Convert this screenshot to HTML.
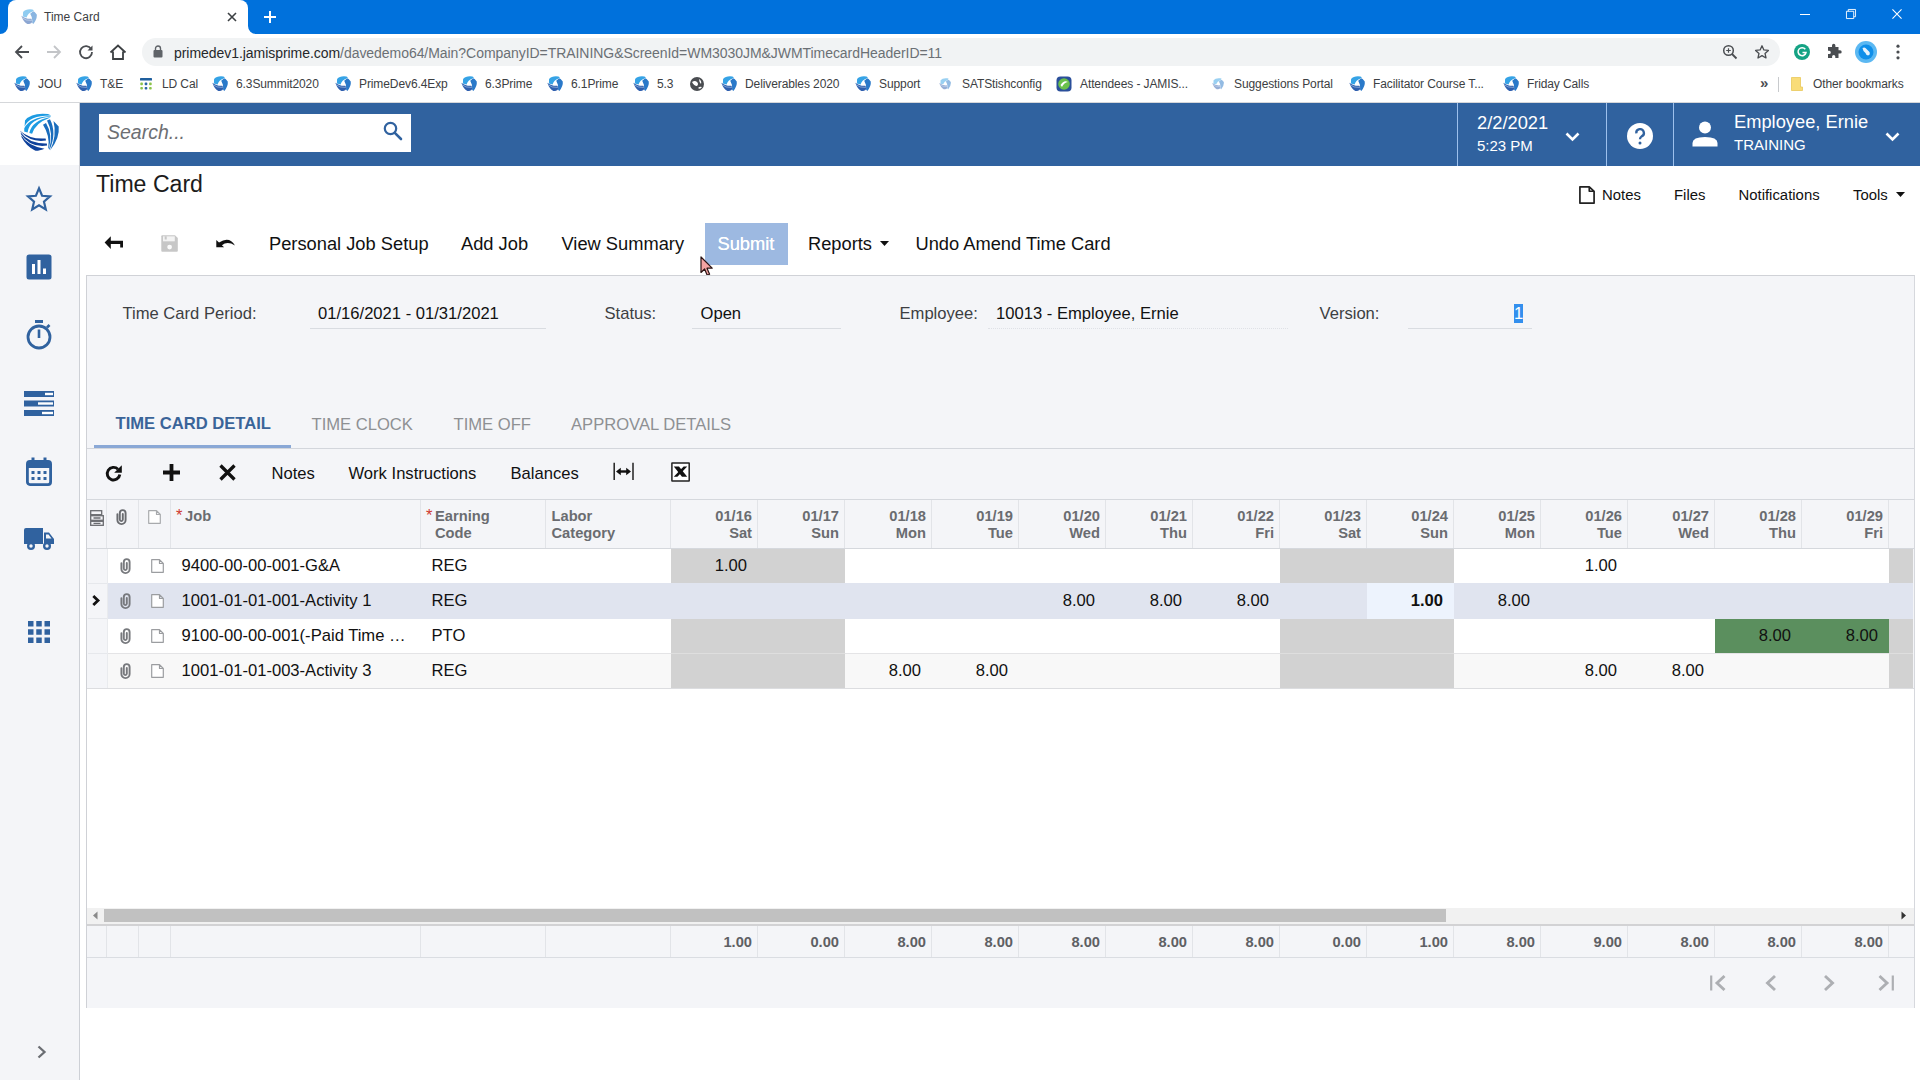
<!DOCTYPE html>
<html>
<head>
<meta charset="utf-8">
<title>Time Card</title>
<style>
*{box-sizing:border-box;margin:0;padding:0}
html,body{width:1920px;height:1080px;overflow:hidden;background:#fff}
body{font-family:"Liberation Sans",sans-serif;color:#111;position:relative}
.abs{position:absolute}
.t{position:absolute;white-space:nowrap;line-height:1}
svg{position:absolute;overflow:visible}
/* chrome */
#titlebar{left:0;top:0;width:1920px;height:34px;background:#0071dc}
#tab{left:8px;top:0;width:240px;height:34px;background:#fff;border-radius:8px 8px 0 0}
#navbar{left:0;top:34px;width:1920px;height:34px;background:#fff}
#pill{left:142px;top:38px;width:1638px;height:28px;border-radius:14px;background:#f1f3f4}
#bmbar{left:0;top:68px;width:1920px;height:34px;background:#fff}
#bmline{left:0;top:102px;width:1920px;height:1px;background:#d5d7da}
.bm{font-size:12px;color:#3c4043;top:78px;letter-spacing:-0.1px}
/* app */
#hdr{left:80px;top:103px;width:1840px;height:63px;background:#30629f}
#side{left:0;top:103px;width:80px;height:977px;background:#f4f5f8;border-right:1px solid #cdd0d6}
#logo{left:0;top:103px;width:79px;height:62px;background:#fff}
#search{left:99px;top:114px;width:312px;height:38px;background:#fff}
.hsep{top:103px;width:1px;height:63px;background:#9dc0ec}
.tb{font-size:17px;color:#111;top:235px}
.lbl{font-size:16px;color:#444;top:306px}
.val{font-size:16px;color:#111;top:306px}
.uline{height:1px;background:#d9dce1;top:328px}
#panel{left:86px;top:275px;width:1829px;height:733px;background:#f4f5f8;border-top:1px solid #d0d2d7;border-left:1px solid #cfd1d6;border-right:1px solid #d6d8dd}
.tab{font-size:16px;color:#8b8d90;top:416px}
.gtb{font-size:16px;color:#111;top:465px}
.hl{height:1px;background:#d5d8dd}
.vl{width:1px;background:#e2e4e8}
.ch{font-size:13px;font-weight:bold;color:#6c6e72;line-height:17px;position:absolute;white-space:nowrap}
.dh{font-size:13px;font-weight:bold;color:#6c6e72;line-height:17px;position:absolute;text-align:right;width:80px;white-space:nowrap}
.cell{font-size:16px;color:#111}
.num{font-size:16px;color:#111;text-align:right;width:80px}
.tot{font-size:14px;font-weight:bold;color:#5a5c60;text-align:right;width:80px;top:935px}
.gray{background:#d2d2d2}
</style>
</head>
<body>
<!-- ===== browser chrome ===== -->
<div id="titlebar" class="abs"></div>
<div id="tab" class="abs"></div>
<div id="navbar" class="abs"></div>
<div id="pill" class="abs"></div>
<div id="bmbar" class="abs"></div>
<div id="bmline" class="abs"></div>
<!-- tab curve corners -->
<svg style="left:0;top:26px" width="8" height="8"><path d="M8 0 V8 H0 A8 8 0 0 0 8 0Z" fill="#fff"/></svg>
<svg style="left:248px;top:26px" width="8" height="8"><path d="M0 0 V8 H8 A8 8 0 0 1 0 0Z" fill="#fff"/></svg>
<!-- favicon -->
<svg style="left:21px;top:9px;opacity:0.55" width="16" height="16"><use href="#jam"/></svg>
<div class="t" style="left:44px;top:11px;font-size:12px;color:#3c4043">Time Card</div>
<svg style="left:227px;top:12px" width="10" height="10" viewBox="0 0 10 10"><path d="M1 1 L9 9 M9 1 L1 9" stroke="#3c4043" stroke-width="1.6" fill="none"/></svg>
<svg style="left:264px;top:11px" width="12" height="12" viewBox="0 0 12 12"><path d="M6 0 V12 M0 6 H12" stroke="#fff" stroke-width="2" fill="none"/></svg>
<!-- window controls -->
<svg style="left:1800px;top:14px" width="10" height="2"><rect width="10" height="1" fill="#fff"/></svg>
<svg style="left:1846px;top:9px" width="10" height="10" viewBox="0 0 11 11"><path d="M0.5 2.5 H8.5 V10.5 H0.5Z M2.5 2.5 V0.5 H10.5 V8.5 H8.5" stroke="#fff" stroke-width="1" fill="none"/></svg>
<svg style="left:1892px;top:9px" width="10" height="10" viewBox="0 0 11 11"><path d="M0.5 0.5 L10.5 10.5 M10.5 0.5 L0.5 10.5" stroke="#fff" stroke-width="1.2" fill="none"/></svg>
<!-- nav icons -->
<svg style="left:14px;top:44px" width="16" height="16" viewBox="0 0 16 16"><path d="M15 8 H2.5 M8 2 L2 8 L8 14" stroke="#4a4d51" stroke-width="1.8" fill="none"/></svg>
<svg style="left:46px;top:44px" width="16" height="16" viewBox="0 0 16 16"><path d="M1 8 H13.5 M8 2 L14 8 L8 14" stroke="#c3c5c8" stroke-width="1.8" fill="none"/></svg>
<svg style="left:78px;top:44px" width="16" height="16" viewBox="0 0 16 16"><path d="M13.2 5.2 A6 6 0 1 0 14 8" stroke="#4a4d51" stroke-width="1.8" fill="none"/><path d="M14.5 1.5 V6.5 H9.5Z" fill="#4a4d51"/></svg>
<svg style="left:109px;top:43px" width="18" height="18" viewBox="0 0 18 18"><path d="M1.5 9.5 L9 2.5 L16.500 9.5 M4 8.500 V16 H14 V8.500" stroke="#3c4043" stroke-width="1.8" fill="none" stroke-linejoin="miter"/></svg>
<!-- lock -->
<svg style="left:153px;top:45px" width="10" height="13" viewBox="0 0 10 13"><rect x="0.500" y="5" width="9" height="7.500" rx="1" fill="#5f6368"/><path d="M2.5 5 V3.500 A2.5 2.5 0 0 1 7.5 3.500 V5" stroke="#5f6368" stroke-width="1.4" fill="none"/></svg>
<div class="t" style="left:174px;top:46px;font-size:14px;letter-spacing:-0.05px;color:#26282b">primedev1.jamisprime.com<span style="color:#6b7075">/davedemo64/Main?CompanyID=TRAINING&amp;ScreenId=WM3030JM&amp;JWMTimecardHeaderID=11</span></div>
<!-- right nav icons -->
<svg style="left:1722px;top:44px" width="16" height="16" viewBox="0 0 16 16"><circle cx="6.500" cy="6.500" r="4.800" stroke="#4a4d51" stroke-width="1.500" fill="none"/><path d="M10 10 L14.500 14.500" stroke="#4a4d51" stroke-width="1.800"/><path d="M4.200 6.500 H8.800 M6.500 4.200 V8.800" stroke="#4a4d51" stroke-width="1.200"/></svg>
<svg style="left:1754px;top:44px" width="16" height="16" viewBox="0 0 18 18"><path d="M9 2 L11.100 6.700 L16.200 7.200 L12.400 10.600 L13.500 15.700 L9 13 L4.500 15.700 L5.600 10.600 L1.800 7.200 L6.900 6.700Z" stroke="#4a4d51" stroke-width="1.500" fill="none" stroke-linejoin="round"/></svg>
<svg style="left:1794px;top:44px" width="16" height="16" viewBox="0 0 16 16"><circle cx="8" cy="8" r="8" fill="#15a384"/><path d="M11.300 5.300 A4 4 0 1 0 12 8.500 H8.500" stroke="#fff" stroke-width="1.500" fill="none"/></svg>
<svg style="left:1826px;top:44px" width="16" height="16" viewBox="0 0 16 16"><path d="M6 1.500 a1.700 1.700 0 0 1 3.400 0 V3 H12.500 V6.200 H14 a1.700 1.700 0 0 1 0 3.400 H12.500 V14 H9.300 V12.600 a1.600 1.600 0 0 0 -3.200 0 V14 H2 V10 H3.200 a1.600 1.600 0 0 0 0 -3.200 H2 V3 H6Z" fill="#4a4d51"/></svg>
<svg style="left:1855px;top:41px" width="22" height="22" viewBox="0 0 22 22"><circle cx="11" cy="11" r="11" fill="#5bb8f2"/><circle cx="11" cy="11" r="7.500" fill="#0f8fea"/><path d="M7.500 7 Q10 5.500 11.500 8 L14.500 11 Q15.500 14 13 14.500 Q11 14 10.500 12 Q8 10.500 7.500 7Z" fill="#e6f3fd"/></svg>
<svg style="left:1896px;top:44px" width="4" height="16" viewBox="0 0 4 16"><circle cx="2" cy="2.200" r="1.600" fill="#4a4d51"/><circle cx="2" cy="8" r="1.600" fill="#4a4d51"/><circle cx="2" cy="13.800" r="1.600" fill="#4a4d51"/></svg>
<!-- bookmarks -->
<svg width="0" height="0"><defs>
<g id="jam"><g transform="translate(-3.300 -2.500) scale(0.385)"><path d="M14 14 Q21 5.500 38 7.500 L42 9.500 L38.500 13 Q26.500 17 23 28.500 L13.500 26Z" fill="#35a3e6"/><path d="M35 17 L40 12.500 L44 14.500 L49.500 20.500 Q51 32 40.500 45.500 L37.500 42.500 Q39.500 30 32.500 19Z" fill="#2a79c9"/><path d="M9.500 24 Q20 33 36 32 L37.800 40 L35 43.500 Q27 46.500 25 45.500 Q15 40.500 9.500 24Z" fill="#2f5fae"/><path d="M12 29.500 Q20 37 36.500 36.200" stroke="#cfe0f3" stroke-width="1.300" fill="none"/></g></g>
</defs></svg>
<svg style="left:14px;top:76px" width="16" height="16"><use href="#jam"/></svg><div class="t bm" style="left:38px">JOU</div>
<svg style="left:76px;top:76px" width="16" height="16"><use href="#jam"/></svg><div class="t bm" style="left:100px">T&amp;E</div>
<svg style="left:140px;top:78px" width="12" height="12" viewBox="0 0 12 12"><rect x="0" y="0" width="12" height="2.600" rx="0.600" fill="#1f5f9e"/><g fill="#8bc34a"><rect x="0.300" y="4.600" width="2.600" height="2.600" rx="0.800"/><rect x="9.100" y="4.600" width="2.600" height="2.600" rx="0.800"/><rect x="0.300" y="9" width="2.600" height="2.600" rx="0.800"/><rect x="9.100" y="9" width="2.600" height="2.600" rx="0.800"/></g><g fill="#2b66a5"><rect x="4.700" y="4.600" width="2.600" height="2.600" rx="0.800"/><rect x="4.700" y="9" width="2.600" height="2.600" rx="0.800"/></g></svg><div class="t bm" style="left:162px">LD Cal</div>
<svg style="left:212px;top:76px" width="16" height="16"><use href="#jam"/></svg><div class="t bm" style="left:236px">6.3Summit2020</div>
<svg style="left:335px;top:76px" width="16" height="16"><use href="#jam"/></svg><div class="t bm" style="left:359px">PrimeDev6.4Exp</div>
<svg style="left:461px;top:76px" width="16" height="16"><use href="#jam"/></svg><div class="t bm" style="left:485px">6.3Prime</div>
<svg style="left:547px;top:76px" width="16" height="16"><use href="#jam"/></svg><div class="t bm" style="left:571px">6.1Prime</div>
<svg style="left:633px;top:76px" width="16" height="16"><use href="#jam"/></svg><div class="t bm" style="left:657px">5.3</div>
<svg style="left:689px;top:76px" width="16" height="16" viewBox="0 0 16 16"><circle cx="8" cy="8" r="7" fill="#4a4d51"/><path d="M3 6 Q6 4 8 6 Q10 8 8 10 Q5 10 3 6Z M10 3 Q13 5 12 8 Q10 6 10 3Z M9 12 Q11 10 13 11 Q11 14 9 12Z" fill="#fff"/></svg>
<svg style="left:721px;top:76px" width="16" height="16"><use href="#jam"/></svg><div class="t bm" style="left:745px">Deliverables 2020</div>
<svg style="left:855px;top:76px" width="16" height="16"><use href="#jam"/></svg><div class="t bm" style="left:879px">Support</div>
<svg style="left:939px;top:78px;opacity:0.5" width="12" height="12" viewBox="0 0 16 16"><use href="#jam"/></svg><div class="t bm" style="left:962px">SATStishconfig</div>
<svg style="left:1056px;top:76px" width="16" height="16" viewBox="0 0 16 16"><rect x="0.500" y="0.500" width="15" height="15" rx="4" fill="#2a4f9a"/><circle cx="8" cy="8" r="5.800" fill="#6ac04a"/><path d="M4.500 9 Q8 3.500 12 6 Q8 6.500 6 11Z" fill="#fff"/></svg><div class="t bm" style="left:1080px">Attendees - JAMIS...</div>
<svg style="left:1212px;top:78px;opacity:0.5" width="12" height="12" viewBox="0 0 16 16"><use href="#jam"/></svg><div class="t bm" style="left:1234px">Suggestions Portal</div>
<svg style="left:1349px;top:76px" width="16" height="16"><use href="#jam"/></svg><div class="t bm" style="left:1373px">Facilitator Course T...</div>
<svg style="left:1503px;top:76px" width="16" height="16"><use href="#jam"/></svg><div class="t bm" style="left:1527px">Friday Calls</div>
<div class="t" style="left:1760px;top:75px;font-size:15px;color:#4a4d51;font-weight:bold">»</div>
<div class="abs" style="left:1778px;top:77px;width:1px;height:15px;background:#c8cacd"></div>
<svg style="left:1791px;top:77px" width="12" height="14" viewBox="0 0 12 14"><path d="M0.500 0.500 H9.500 V10 H11.500 V13.500 H0.500Z" fill="#f9dc78" stroke="#e9c85a" stroke-width="0.800"/></svg>
<div class="t bm" style="left:1813px">Other bookmarks</div>
<!--CHROME-->
<!-- ===== app ===== -->
<div id="side" class="abs"></div>
<div id="logo" class="abs"></div>
<div id="hdr" class="abs"></div>
<div id="search" class="abs"></div>
<!-- search -->
<div class="t" style="left:107px;top:123px;font-size:19.500px;font-style:italic;color:#6d6f73">Search...</div>
<svg style="left:383px;top:121px" width="20" height="20" viewBox="0 0 20 20"><circle cx="7.500" cy="7.500" r="5.700" stroke="#30629f" stroke-width="2.200" fill="none"/><path d="M11.800 11.800 L18 18" stroke="#30629f" stroke-width="2.600" stroke-linecap="round"/></svg>
<!-- header right -->
<div class="abs hsep" style="left:1457px"></div>
<div class="abs hsep" style="left:1606px"></div>
<div class="abs hsep" style="left:1673px"></div>
<div class="t" style="left:1477px;top:114px;font-size:18.3px;color:#fff">2/2/2021</div>
<div class="t" style="left:1477px;top:138px;font-size:15px;color:#fff">5:23 PM</div>
<svg style="left:1565px;top:132px" width="15" height="10" viewBox="0 0 15 10"><path d="M1.500 1.500 L7.500 7.500 L13.500 1.500" stroke="#fff" stroke-width="2.600" fill="none"/></svg>
<svg style="left:1627px;top:123px" width="26" height="26" viewBox="0 0 26 26"><circle cx="13" cy="13" r="13" fill="#fff"/><path d="M9.300 10.300 A3.800 3.800 0 1 1 14.600 13.400 Q13 14.500 13 16.300" stroke="#30629f" stroke-width="2.300" fill="none"/><circle cx="13" cy="20" r="1.500" fill="#30629f"/></svg>
<svg style="left:1692px;top:121px" width="26" height="26" viewBox="0 0 26 26"><circle cx="13" cy="6.500" r="6" fill="#fff"/><path d="M0.500 25.500 V22 Q0.500 16 13 16 Q25.500 16 25.500 22 V25.500Z" fill="#fff"/></svg>
<div class="t" style="left:1734px;top:113px;font-size:18.3px;color:#fff">Employee, Ernie</div>
<div class="t" style="left:1734px;top:137px;font-size:15px;color:#fff">TRAINING</div>
<svg style="left:1885px;top:132px" width="15" height="10" viewBox="0 0 15 10"><path d="M1.500 1.500 L7.500 7.500 L13.500 1.500" stroke="#fff" stroke-width="2.600" fill="none"/></svg>
<!--APPHDR-->
<!-- logo -->
<svg style="left:10px;top:106px" width="60" height="54" viewBox="0 0 60 54">
<g fill="#1d9be2">
<path d="M15 14.500 Q21.500 6.400 38 8.100 L41.200 9.500 Q19.300 9.200 14.600 20.500Z"/>
<path d="M14.300 22.200 Q19.700 11 40.500 9.900 L41 10.500 Q18.900 12.600 17.600 26.600 L14.200 25.600Z"/>
<path d="M19.300 27 Q22 14.100 40.700 10.900 L38.200 12.600 Q25.800 16.800 22.100 27.800Z"/>
</g>
<g fill="#1a6dbd">
<path d="M43.500 15 L48.700 20.500 Q50 32 40 44.600 Q47.200 30 43.500 15Z"/>
<path d="M40 13.200 Q47 27 39.600 43.600 L38.900 43.400 Q44.200 28 37 14.500Z"/>
<path d="M36 17 Q43 28.500 38.700 42.800 L38.200 42.300 Q40.300 30 33 18.700Z"/>
</g>
<g fill="#0e419b">
<path d="M10 24.700 Q20 33.600 35.600 32.500 L36 34.600 Q21 37 10.500 25.600Z"/>
<path d="M10.700 26.600 Q19 38 36.800 37.400 L37.100 39.600 Q20 42 11 28.200Z"/>
<path d="M11.300 29.200 Q17 39.500 34.500 42.700 Q27 45.600 25 44.500 Q16 40 11.600 31.200Z"/>
</g>
</svg>
<!-- star -->
<svg style="left:25px;top:185px" width="28" height="28" viewBox="0 0 30 30"><path d="M15 3.500 L18.300 11.500 L26.800 12.200 L20.300 17.800 L22.300 26.200 L15 21.700 L7.700 26.200 L9.700 17.800 L3.200 12.200 L11.700 11.500Z" stroke="#30629f" stroke-width="2.300" fill="none" stroke-linejoin="miter"/></svg>
<!-- chart -->
<svg style="left:26px;top:254px" width="26" height="26" viewBox="0 0 26 26"><rect x="0.500" y="0.500" width="25" height="25" rx="2.500" fill="#30629f"/><rect x="6" y="10" width="3" height="10" fill="#fff"/><rect x="11.500" y="6" width="3" height="14" fill="#fff"/><rect x="17" y="14.500" width="3" height="5.500" fill="#fff"/></svg>
<!-- stopwatch -->
<svg style="left:25px;top:319px" width="28" height="32" viewBox="0 0 28 32"><rect x="10" y="1" width="8" height="3" fill="#30629f"/><circle cx="14" cy="18" r="11" stroke="#30629f" stroke-width="2.800" fill="none"/><rect x="12.700" y="10.500" width="2.600" height="8.500" fill="#30629f"/><path d="M22 8.500 L24.500 6" stroke="#30629f" stroke-width="2.600"/></svg>
<!-- list bars -->
<svg style="left:24px;top:391px" width="30" height="25" viewBox="0 0 30 25"><rect x="0" y="0" width="30" height="6" fill="#30629f"/><rect x="0" y="9.500" width="30" height="6" fill="#30629f"/><rect x="0" y="19" width="30" height="6" fill="#30629f"/><rect x="21" y="1.800" width="8" height="2.400" fill="#fff"/><rect x="14" y="11.300" width="15" height="2.400" fill="#fff"/><rect x="18" y="20.800" width="11" height="2.400" fill="#fff"/></svg>
<!-- calendar -->
<svg style="left:26px;top:457px" width="26" height="29" viewBox="0 0 26 29"><rect x="1.400" y="4.400" width="23.200" height="23.200" rx="2.500" stroke="#30629f" stroke-width="2.800" fill="none"/><rect x="1" y="4" width="24" height="7" fill="#30629f"/><rect x="5.500" y="0.500" width="3" height="6" fill="#30629f"/><rect x="17.500" y="0.500" width="3" height="6" fill="#30629f"/><g fill="#30629f"><rect x="5.500" y="14" width="3" height="3"/><rect x="11.500" y="14" width="3" height="3"/><rect x="17.500" y="14" width="3" height="3"/><rect x="5.500" y="20" width="3" height="3"/><rect x="11.500" y="20" width="3" height="3"/><rect x="17.500" y="20" width="3" height="3"/></g></svg>
<!-- truck -->
<svg style="left:24px;top:528px" width="30" height="23" viewBox="0 0 30 23"><path d="M0 2 Q0 0 2 0 H19 V16 H0Z" fill="#30629f"/><path d="M20 4.500 H25 L30 11 V16 H20Z" fill="#30629f"/><path d="M22 6.500 H24.500 L27.500 10.500 H22Z" fill="#f4f5f8"/><circle cx="7" cy="18" r="4" fill="#30629f"/><circle cx="7" cy="18" r="1.700" fill="#f4f5f8"/><circle cx="23" cy="18" r="4" fill="#30629f"/><circle cx="23" cy="18" r="1.700" fill="#f4f5f8"/></svg>
<!-- apps grid -->
<svg style="left:28px;top:621px" width="22" height="22" viewBox="0 0 24 24"><g fill="#30629f"><rect x="0" y="0" width="6" height="6"/><rect x="9" y="0" width="6" height="6"/><rect x="18" y="0" width="6" height="6"/><rect x="0" y="9" width="6" height="6"/><rect x="9" y="9" width="6" height="6"/><rect x="18" y="9" width="6" height="6"/><rect x="0" y="18" width="6" height="6"/><rect x="9" y="18" width="6" height="6"/><rect x="18" y="18" width="6" height="6"/></g></svg>
<!-- expand chevron -->
<svg style="left:37px;top:1045px" width="9" height="14" viewBox="0 0 9 14"><path d="M1.500 1.500 L7.500 7 L1.500 12.500" stroke="#6b6e73" stroke-width="2.300" fill="none"/></svg>
<!--SIDEBAR-->
<div class="t" style="left:96px;top:173px;font-size:23.1px;color:#1c1c1c;">Time Card</div>
<svg style="left:1579px;top:186px" width="16" height="18" viewBox="0 0 14 17" preserveAspectRatio="none"><path d="M0.800 0.800 H9 L13.200 5 V16.200 H0.800Z M9 0.800 V5 H13.200" stroke="#222" stroke-width="1.500" fill="none" stroke-linejoin="round"/></svg>
<div class="t" style="left:1602px;top:188px;font-size:14.9px;color:#111;">Notes</div>
<div class="t" style="left:1674px;top:188px;font-size:14.9px;color:#111;">Files</div>
<div class="t" style="left:1738.5px;top:188px;font-size:14.9px;color:#111;">Notifications</div>
<div class="t" style="left:1853px;top:188px;font-size:14.9px;color:#111;">Tools</div>
<svg style="left:1896px;top:192px" width="9" height="5"><path d="M0 0 H9 L4.500 5Z" fill="#111"/></svg>
<svg style="left:104px;top:236px" width="20" height="14" viewBox="0 0 20 14"><path d="M0.600 6.400 L6.800 0.200 V4.800 H19 V11.500 H16.200 V8 H6.800 V13Z" fill="#111"/></svg>
<svg style="left:161px;top:235px" width="17" height="17" viewBox="0 0 17 17"><path d="M0.300 1.200 Q0.300 0.300 1.200 0.300 H14 L16.800 3.100 V15.800 Q16.800 16.700 15.900 16.700 H1.200 Q0.300 16.700 0.300 15.800Z" fill="#c7c7c7"/><rect x="2" y="1.300" width="11.800" height="5" fill="#f3f3f3"/><rect x="3.700" y="1.300" width="2" height="3.200" fill="#c7c7c7"/><circle cx="8.600" cy="12.100" r="2.400" fill="#fbfbfb"/></svg>
<svg style="left:215px;top:238px" width="21" height="11" viewBox="0 0 21 11"><path d="M1.300 2 V9.300 H9.100 L6.900 7.300 Q12.500 2.800 20 7.600 Q14.500 -2.200 4 4.400Z" fill="#111"/></svg>
<div class="t" style="left:269px;top:235px;font-size:18.3px;color:#111;">Personal Job Setup</div>
<div class="t" style="left:461px;top:235px;font-size:18.3px;color:#111;">Add Job</div>
<div class="t" style="left:561.5px;top:235px;font-size:18.3px;color:#111;">View Summary</div>
<div class="abs" style="left:705px;top:223px;width:83px;height:42px;background:#9db9e1"></div>
<div class="t" style="left:717.5px;top:235px;font-size:18.3px;color:#fff;text-shadow:0 0 0.5px #fff">Submit</div>
<div class="t" style="left:808px;top:235px;font-size:18.3px;color:#111;">Reports</div>
<svg style="left:880px;top:241px" width="9" height="5"><path d="M0 0 H9 L4.500 5Z" fill="#111"/></svg>
<div class="t" style="left:915.5px;top:235px;font-size:18.3px;color:#111;">Undo Amend Time Card</div>
<svg style="left:700px;top:256px" width="14" height="21" viewBox="0 0 14 21"><path d="M1 1 V16.500 L4.600 13 L7.200 19.200 L9.600 18.200 L7 12.200 H12.200Z" fill="#f4a3a3" stroke="#2a1414" stroke-width="1.200" stroke-linejoin="round"/></svg>

<div id="panel" class="abs"></div>
<div class="t" style="left:122.5px;top:306px;font-size:16.6px;color:#3d3f43;">Time Card Period:</div>
<div class="t" style="left:318px;top:306px;font-size:16.6px;color:#111;">01/16/2021 - 01/31/2021</div>
<div class="abs uline" style="left:310px;width:236px"></div>
<div class="t" style="left:604.5px;top:306px;font-size:16.6px;color:#3d3f43;">Status:</div>
<div class="t" style="left:700.5px;top:306px;font-size:16.6px;color:#111;">Open</div>
<div class="abs uline" style="left:692px;width:149px"></div>
<div class="t" style="left:899.5px;top:306px;font-size:16.6px;color:#3d3f43;">Employee:</div>
<div class="t" style="left:996px;top:306px;font-size:16.6px;color:#111;">10013 - Employee, Ernie</div>
<div class="abs" style="left:988px;top:328px;width:300px;height:0;border-top:1px dotted #dfe1e6"></div>
<div class="t" style="left:1319.5px;top:306px;font-size:16.6px;color:#3d3f43;">Version:</div>
<div class="abs uline" style="left:1408px;width:124px"></div>
<div class="abs" style="left:1514px;top:304px;width:9px;height:19px;background:#338fee"></div>
<div class="t" style="left:1514px;top:306px;font-size:16.6px;color:#fff;">1</div>
<div class="t" style="left:115.5px;top:416px;font-size:16.6px;color:#3a6499;font-weight:bold">TIME CARD DETAIL</div>
<div class="t" style="left:311.5px;top:417px;font-size:16.6px;color:#8e9093;">TIME CLOCK</div>
<div class="t" style="left:453.5px;top:417px;font-size:16.6px;color:#8e9093;">TIME OFF</div>
<div class="t" style="left:571px;top:417px;font-size:16.6px;color:#8e9093;">APPROVAL DETAILS</div>
<div class="abs hl" style="left:87px;top:448px;width:1827px;background:#d3d6dc"></div>
<div class="abs" style="left:94px;top:445px;width:197px;height:3px;background:#8aa8d6"></div>
<svg style="left:105px;top:465px" width="17" height="17" viewBox="0 0 17 17"><path d="M13 4.200 A6.300 6.300 0 1 0 14.800 9.500" stroke="#111" stroke-width="2.900" fill="none"/><path d="M16.800 0.200 V7.800 H9.200Z" fill="#111"/></svg>
<svg style="left:163px;top:464px" width="17" height="17" viewBox="0 0 17 17"><path d="M8.500 0 V17 M0 8.500 H17" stroke="#111" stroke-width="3.800"/></svg>
<svg style="left:219px;top:464px" width="17" height="17" viewBox="0 0 17 17"><path d="M1.500 1.500 L15.500 15.500 M15.500 1.500 L1.500 15.500" stroke="#111" stroke-width="3.300"/></svg>
<div class="t" style="left:271.5px;top:466px;font-size:16.6px;color:#111;">Notes</div>
<div class="t" style="left:348.5px;top:466px;font-size:16.6px;color:#111;">Work Instructions</div>
<div class="t" style="left:510.5px;top:466px;font-size:16.6px;color:#111;">Balances</div>
<svg style="left:613px;top:463px" width="21" height="17" viewBox="0 0 21 17"><path d="M1.200 -0.300 V16.900 M20 -0.300 V16.900" stroke="#222" stroke-width="1.500"/><path d="M5.500 8.500 H15.500" stroke="#111" stroke-width="2.400"/><path d="M3 8.500 L7.800 4.700 V12.300Z M18 8.500 L13.200 4.700 V12.300Z" fill="#111"/></svg>
<svg style="left:671px;top:462px" width="19" height="20" viewBox="0 0 19 20"><rect x="0.900" y="0.900" width="17.300" height="18" rx="0.200" stroke="#222" stroke-width="1.500" fill="#fff"/><path d="M2.800 4.600 H8 L16.200 14.800 H11 Z" fill="#111"/><path d="M16.200 4.600 H12.600 L2.800 14.800 H6.400 Z" fill="#111"/></svg>

<div class="abs hl" style="left:87px;top:499px;width:1827px"></div>
<div class="abs hl" style="left:87px;top:548px;width:1827px"></div>
<div class="abs" style="left:107px;top:549px;width:1806px;height:34px;background:#fff"></div>
<div class="abs" style="left:107px;top:583px;width:1806px;height:36px;background:#e0e4ef"></div>
<div class="abs" style="left:107px;top:619px;width:1806px;height:34px;background:#fff"></div>
<div class="abs" style="left:107px;top:653px;width:1806px;height:35px;background:#f8f8f8"></div>
<div class="abs" style="left:87px;top:688px;width:1827px;height:220px;background:#fff"></div>
<div class="abs hl" style="left:87px;top:688px;width:1827px;background:#dcdde0"></div>
<div class="abs hl" style="left:107px;top:653px;width:1806px;background:#e4e4e6"></div>
<div class="abs gray" style="left:671px;top:549px;width:174px;height:34px"></div>
<div class="abs gray" style="left:1280px;top:549px;width:174px;height:34px"></div>
<div class="abs gray" style="left:1889px;top:549px;width:24px;height:34px"></div>
<div class="abs gray" style="left:671px;top:619px;width:174px;height:34px"></div>
<div class="abs gray" style="left:1280px;top:619px;width:174px;height:34px"></div>
<div class="abs gray" style="left:1889px;top:619px;width:24px;height:34px"></div>
<div class="abs gray" style="left:671px;top:653px;width:174px;height:35px"></div>
<div class="abs gray" style="left:1280px;top:653px;width:174px;height:35px"></div>
<div class="abs gray" style="left:1889px;top:653px;width:24px;height:35px"></div>
<div class="abs" style="left:671px;top:653px;width:174px;height:1px;background:#dedede"></div>
<div class="abs" style="left:1280px;top:653px;width:174px;height:1px;background:#dedede"></div>
<div class="abs" style="left:1889px;top:653px;width:24px;height:1px;background:#dedede"></div>
<div class="abs" style="left:1715px;top:619px;width:174px;height:34px;background:#5b8f5e"></div>
<div class="abs" style="left:1367px;top:583px;width:87px;height:36px;background:#edf3fd"></div>
<div class="abs vl" style="left:106px;top:500px;height:48px"></div>
<div class="abs vl" style="left:138px;top:500px;height:48px"></div>
<div class="abs vl" style="left:170px;top:500px;height:48px"></div>
<div class="abs vl" style="left:420px;top:500px;height:48px"></div>
<div class="abs vl" style="left:545px;top:500px;height:48px"></div>
<div class="abs vl" style="left:670px;top:500px;height:48px"></div>
<div class="abs vl" style="left:757px;top:500px;height:48px"></div>
<div class="abs vl" style="left:844px;top:500px;height:48px"></div>
<div class="abs vl" style="left:931px;top:500px;height:48px"></div>
<div class="abs vl" style="left:1018px;top:500px;height:48px"></div>
<div class="abs vl" style="left:1105px;top:500px;height:48px"></div>
<div class="abs vl" style="left:1192px;top:500px;height:48px"></div>
<div class="abs vl" style="left:1279px;top:500px;height:48px"></div>
<div class="abs vl" style="left:1366px;top:500px;height:48px"></div>
<div class="abs vl" style="left:1453px;top:500px;height:48px"></div>
<div class="abs vl" style="left:1540px;top:500px;height:48px"></div>
<div class="abs vl" style="left:1627px;top:500px;height:48px"></div>
<div class="abs vl" style="left:1714px;top:500px;height:48px"></div>
<div class="abs vl" style="left:1801px;top:500px;height:48px"></div>
<div class="abs vl" style="left:1888px;top:500px;height:48px"></div>
<div class="t" style="left:176px;top:507px;font-size:16.500px;color:#cf3a30">*</div>
<div class="t" style="left:185px;top:509px;font-size:14.7px;font-weight:bold;color:#6a6c70">Job</div>
<div class="t" style="left:426px;top:507px;font-size:16.500px;color:#cf3a30">*</div>
<div class="t" style="left:435px;top:509px;font-size:14.7px;font-weight:bold;color:#6a6c70">Earning</div>
<div class="t" style="left:435px;top:526px;font-size:14.7px;font-weight:bold;color:#6a6c70">Code</div>
<div class="t" style="left:551.5px;top:509px;font-size:14.7px;font-weight:bold;color:#6a6c70">Labor</div>
<div class="t" style="left:551.5px;top:526px;font-size:14.7px;font-weight:bold;color:#6a6c70">Category</div>
<div class="t" style="right:1168px;top:509px;font-size:14.7px;font-weight:bold;color:#6a6c70">01/16</div>
<div class="t" style="right:1168px;top:526px;font-size:14.7px;font-weight:bold;color:#6a6c70">Sat</div>
<div class="t" style="right:1081px;top:509px;font-size:14.7px;font-weight:bold;color:#6a6c70">01/17</div>
<div class="t" style="right:1081px;top:526px;font-size:14.7px;font-weight:bold;color:#6a6c70">Sun</div>
<div class="t" style="right:994px;top:509px;font-size:14.7px;font-weight:bold;color:#6a6c70">01/18</div>
<div class="t" style="right:994px;top:526px;font-size:14.7px;font-weight:bold;color:#6a6c70">Mon</div>
<div class="t" style="right:907px;top:509px;font-size:14.7px;font-weight:bold;color:#6a6c70">01/19</div>
<div class="t" style="right:907px;top:526px;font-size:14.7px;font-weight:bold;color:#6a6c70">Tue</div>
<div class="t" style="right:820px;top:509px;font-size:14.7px;font-weight:bold;color:#6a6c70">01/20</div>
<div class="t" style="right:820px;top:526px;font-size:14.7px;font-weight:bold;color:#6a6c70">Wed</div>
<div class="t" style="right:733px;top:509px;font-size:14.7px;font-weight:bold;color:#6a6c70">01/21</div>
<div class="t" style="right:733px;top:526px;font-size:14.7px;font-weight:bold;color:#6a6c70">Thu</div>
<div class="t" style="right:646px;top:509px;font-size:14.7px;font-weight:bold;color:#6a6c70">01/22</div>
<div class="t" style="right:646px;top:526px;font-size:14.7px;font-weight:bold;color:#6a6c70">Fri</div>
<div class="t" style="right:559px;top:509px;font-size:14.7px;font-weight:bold;color:#6a6c70">01/23</div>
<div class="t" style="right:559px;top:526px;font-size:14.7px;font-weight:bold;color:#6a6c70">Sat</div>
<div class="t" style="right:472px;top:509px;font-size:14.7px;font-weight:bold;color:#6a6c70">01/24</div>
<div class="t" style="right:472px;top:526px;font-size:14.7px;font-weight:bold;color:#6a6c70">Sun</div>
<div class="t" style="right:385px;top:509px;font-size:14.7px;font-weight:bold;color:#6a6c70">01/25</div>
<div class="t" style="right:385px;top:526px;font-size:14.7px;font-weight:bold;color:#6a6c70">Mon</div>
<div class="t" style="right:298px;top:509px;font-size:14.7px;font-weight:bold;color:#6a6c70">01/26</div>
<div class="t" style="right:298px;top:526px;font-size:14.7px;font-weight:bold;color:#6a6c70">Tue</div>
<div class="t" style="right:211px;top:509px;font-size:14.7px;font-weight:bold;color:#6a6c70">01/27</div>
<div class="t" style="right:211px;top:526px;font-size:14.7px;font-weight:bold;color:#6a6c70">Wed</div>
<div class="t" style="right:124px;top:509px;font-size:14.7px;font-weight:bold;color:#6a6c70">01/28</div>
<div class="t" style="right:124px;top:526px;font-size:14.7px;font-weight:bold;color:#6a6c70">Thu</div>
<div class="t" style="right:37px;top:509px;font-size:14.7px;font-weight:bold;color:#6a6c70">01/29</div>
<div class="t" style="right:37px;top:526px;font-size:14.7px;font-weight:bold;color:#6a6c70">Fri</div>
<svg style="left:90px;top:510px" width="14" height="16" viewBox="0 0 14 16"><g stroke="#6a6c70" stroke-width="1.300" fill="none"><rect x="0.700" y="0.700" width="11" height="4"/><rect x="0.700" y="5.700" width="12.600" height="4.600"/><rect x="0.700" y="11.300" width="12.600" height="4"/></g><path d="M3.500 8 H10.500 M3.500 13.300 H10.500" stroke="#6a6c70" stroke-width="1.300"/></svg>
<svg style="left:116px;top:509px" width="11" height="16" viewBox="0 0 11 16"><path d="M1.400 5.200 V11 A4.100 4.100 0 0 0 9.600 11 V4 A2.900 2.900 0 0 0 3.800 4 V10.600 A1.500 1.500 0 0 0 6.800 10.600 V5" stroke="#6a6c70" stroke-width="1.900" fill="none" stroke-linecap="round"/></svg>
<svg style="left:148px;top:510px" width="13" height="14" viewBox="0 0 13 14"><path d="M0.700 0.700 H8.500 L12.300 4.500 V13.300 H0.700Z M8.500 0.700 V4.500 H12.300" stroke="#a8aaad" stroke-width="1.200" fill="#fff" stroke-linejoin="round"/></svg>
<svg style="left:120px;top:558px" width="11" height="16" viewBox="0 0 11 16"><path d="M1.400 5.200 V11 A4.100 4.100 0 0 0 9.600 11 V4 A2.900 2.900 0 0 0 3.800 4 V10.600 A1.500 1.500 0 0 0 6.800 10.600 V5" stroke="#77797d" stroke-width="1.900" fill="none" stroke-linecap="round"/></svg>
<svg style="left:151px;top:559px" width="13" height="14" viewBox="0 0 13 14"><path d="M0.700 0.700 H8.500 L12.300 4.500 V13.300 H0.700Z M8.500 0.700 V4.500 H12.300" stroke="#9b9da0" stroke-width="1.200" fill="#fff" stroke-linejoin="round"/></svg>
<div class="t" style="left:181.5px;top:558px;font-size:16.6px;color:#111;">9400-00-00-001-G&amp;A</div>
<div class="t" style="left:431.5px;top:558px;font-size:16.6px;color:#111;">REG</div>
<div class="t" style="right:1173px;top:558px;font-size:16.6px;color:#111;">1.00</div>
<div class="t" style="right:303px;top:558px;font-size:16.6px;color:#111;">1.00</div>
<svg style="left:120px;top:593px" width="11" height="16" viewBox="0 0 11 16"><path d="M1.400 5.200 V11 A4.100 4.100 0 0 0 9.600 11 V4 A2.900 2.900 0 0 0 3.800 4 V10.600 A1.500 1.500 0 0 0 6.800 10.600 V5" stroke="#77797d" stroke-width="1.900" fill="none" stroke-linecap="round"/></svg>
<svg style="left:151px;top:594px" width="13" height="14" viewBox="0 0 13 14"><path d="M0.700 0.700 H8.500 L12.300 4.500 V13.300 H0.700Z M8.500 0.700 V4.500 H12.300" stroke="#9b9da0" stroke-width="1.200" fill="#fff" stroke-linejoin="round"/></svg>
<div class="t" style="left:181.5px;top:593px;font-size:16.6px;color:#111;">1001-01-01-001-Activity 1</div>
<div class="t" style="left:431.5px;top:593px;font-size:16.6px;color:#111;">REG</div>
<div class="t" style="right:825px;top:593px;font-size:16.6px;color:#111;">8.00</div>
<div class="t" style="right:738px;top:593px;font-size:16.6px;color:#111;">8.00</div>
<div class="t" style="right:651px;top:593px;font-size:16.6px;color:#111;">8.00</div>
<div class="t" style="right:477px;top:593px;font-size:16.6px;color:#111;"><b>1.00</b></div>
<div class="t" style="right:390px;top:593px;font-size:16.6px;color:#111;">8.00</div>
<svg style="left:120px;top:628px" width="11" height="16" viewBox="0 0 11 16"><path d="M1.400 5.200 V11 A4.100 4.100 0 0 0 9.600 11 V4 A2.900 2.900 0 0 0 3.800 4 V10.600 A1.500 1.500 0 0 0 6.800 10.600 V5" stroke="#77797d" stroke-width="1.900" fill="none" stroke-linecap="round"/></svg>
<svg style="left:151px;top:629px" width="13" height="14" viewBox="0 0 13 14"><path d="M0.700 0.700 H8.500 L12.300 4.500 V13.300 H0.700Z M8.500 0.700 V4.500 H12.300" stroke="#9b9da0" stroke-width="1.200" fill="#fff" stroke-linejoin="round"/></svg>
<div class="t" style="left:181.5px;top:628px;font-size:16.6px;color:#111;">9100-00-00-001(-Paid Time …</div>
<div class="t" style="left:431.5px;top:628px;font-size:16.6px;color:#111;">PTO</div>
<div class="t" style="right:129px;top:628px;font-size:16.6px;color:#111;">8.00</div>
<div class="t" style="right:42px;top:628px;font-size:16.6px;color:#111;">8.00</div>
<svg style="left:120px;top:663px" width="11" height="16" viewBox="0 0 11 16"><path d="M1.400 5.200 V11 A4.100 4.100 0 0 0 9.600 11 V4 A2.900 2.900 0 0 0 3.800 4 V10.600 A1.500 1.500 0 0 0 6.800 10.600 V5" stroke="#77797d" stroke-width="1.900" fill="none" stroke-linecap="round"/></svg>
<svg style="left:151px;top:664px" width="13" height="14" viewBox="0 0 13 14"><path d="M0.700 0.700 H8.500 L12.300 4.500 V13.300 H0.700Z M8.500 0.700 V4.500 H12.300" stroke="#9b9da0" stroke-width="1.200" fill="#fff" stroke-linejoin="round"/></svg>
<div class="t" style="left:181.5px;top:663px;font-size:16.6px;color:#111;">1001-01-01-003-Activity 3</div>
<div class="t" style="left:431.5px;top:663px;font-size:16.6px;color:#111;">REG</div>
<div class="t" style="right:999px;top:663px;font-size:16.6px;color:#111;">8.00</div>
<div class="t" style="right:912px;top:663px;font-size:16.6px;color:#111;">8.00</div>
<div class="t" style="right:303px;top:663px;font-size:16.6px;color:#111;">8.00</div>
<div class="t" style="right:216px;top:663px;font-size:16.6px;color:#111;">8.00</div>
<div class="abs" style="left:88px;top:583px;width:19px;height:1px;background:#e6e8ec"></div>
<div class="abs" style="left:88px;top:618px;width:19px;height:1px;background:#e6e8ec"></div>
<div class="abs" style="left:88px;top:653px;width:19px;height:1px;background:#e6e8ec"></div>
<div class="abs" style="left:107px;top:549px;width:1px;height:139px;background:#e9ebee"></div>
<svg style="left:92px;top:595px" width="8" height="11" viewBox="0 0 8 11"><path d="M1.300 1 L6 5.500 L1.300 10" stroke="#111" stroke-width="2.800" fill="none"/></svg>

<div class="abs" style="left:87px;top:908px;width:1827px;height:16px;background:#f1f1f1"></div>
<div class="abs" style="left:104px;top:909px;width:1342px;height:13px;background:#c1c1c1"></div>
<svg style="left:92px;top:911px" width="6" height="9"><path d="M5.500 0.500 V8.500 L1 4.500Z" fill="#8a8a8a"/></svg>
<svg style="left:1901px;top:911px" width="6" height="9"><path d="M0.500 0.500 V8.500 L5 4.500Z" fill="#333"/></svg>
<div class="abs hl" style="left:87px;top:924px;width:1827px;height:2px;background:#d2d2d4"></div>
<div class="abs hl" style="left:87px;top:957px;width:1827px;background:#dadde2"></div>
<div class="abs vl" style="left:106px;top:926px;height:31px"></div>
<div class="abs vl" style="left:138px;top:926px;height:31px"></div>
<div class="abs vl" style="left:170px;top:926px;height:31px"></div>
<div class="abs vl" style="left:420px;top:926px;height:31px"></div>
<div class="abs vl" style="left:545px;top:926px;height:31px"></div>
<div class="abs vl" style="left:670px;top:926px;height:31px"></div>
<div class="abs vl" style="left:757px;top:926px;height:31px"></div>
<div class="abs vl" style="left:844px;top:926px;height:31px"></div>
<div class="abs vl" style="left:931px;top:926px;height:31px"></div>
<div class="abs vl" style="left:1018px;top:926px;height:31px"></div>
<div class="abs vl" style="left:1105px;top:926px;height:31px"></div>
<div class="abs vl" style="left:1192px;top:926px;height:31px"></div>
<div class="abs vl" style="left:1279px;top:926px;height:31px"></div>
<div class="abs vl" style="left:1366px;top:926px;height:31px"></div>
<div class="abs vl" style="left:1453px;top:926px;height:31px"></div>
<div class="abs vl" style="left:1540px;top:926px;height:31px"></div>
<div class="abs vl" style="left:1627px;top:926px;height:31px"></div>
<div class="abs vl" style="left:1714px;top:926px;height:31px"></div>
<div class="abs vl" style="left:1801px;top:926px;height:31px"></div>
<div class="abs vl" style="left:1888px;top:926px;height:31px"></div>
<div class="t" style="right:1168px;top:935px;font-size:14.7px;color:#5e6064;font-weight:bold">1.00</div>
<div class="t" style="right:1081px;top:935px;font-size:14.7px;color:#5e6064;font-weight:bold">0.00</div>
<div class="t" style="right:994px;top:935px;font-size:14.7px;color:#5e6064;font-weight:bold">8.00</div>
<div class="t" style="right:907px;top:935px;font-size:14.7px;color:#5e6064;font-weight:bold">8.00</div>
<div class="t" style="right:820px;top:935px;font-size:14.7px;color:#5e6064;font-weight:bold">8.00</div>
<div class="t" style="right:733px;top:935px;font-size:14.7px;color:#5e6064;font-weight:bold">8.00</div>
<div class="t" style="right:646px;top:935px;font-size:14.7px;color:#5e6064;font-weight:bold">8.00</div>
<div class="t" style="right:559px;top:935px;font-size:14.7px;color:#5e6064;font-weight:bold">0.00</div>
<div class="t" style="right:472px;top:935px;font-size:14.7px;color:#5e6064;font-weight:bold">1.00</div>
<div class="t" style="right:385px;top:935px;font-size:14.7px;color:#5e6064;font-weight:bold">8.00</div>
<div class="t" style="right:298px;top:935px;font-size:14.7px;color:#5e6064;font-weight:bold">9.00</div>
<div class="t" style="right:211px;top:935px;font-size:14.7px;color:#5e6064;font-weight:bold">8.00</div>
<div class="t" style="right:124px;top:935px;font-size:14.7px;color:#5e6064;font-weight:bold">8.00</div>
<div class="t" style="right:37px;top:935px;font-size:14.7px;color:#5e6064;font-weight:bold">8.00</div>
<svg style="left:1710px;top:975px" width="16" height="16" viewBox="0 0 16 16"><path d="M1.200 0.500 V15.500" stroke="#adafb3" stroke-width="2.200"/><path d="M14.500 1 L7 8 L14.500 15" stroke="#adafb3" stroke-width="2.900" fill="none"/></svg>
<svg style="left:1766px;top:975px" width="10" height="16" viewBox="0 0 10 16"><path d="M9 1 L1.500 8 L9 15" stroke="#adafb3" stroke-width="2.900" fill="none"/></svg>
<svg style="left:1824px;top:975px" width="10" height="16" viewBox="0 0 10 16"><path d="M1 1 L8.500 8 L1 15" stroke="#adafb3" stroke-width="2.900" fill="none"/></svg>
<svg style="left:1878px;top:975px" width="16" height="16" viewBox="0 0 16 16"><path d="M14.800 0.500 V15.500" stroke="#adafb3" stroke-width="2.200"/><path d="M1.500 1 L9 8 L1.500 15" stroke="#adafb3" stroke-width="2.900" fill="none"/></svg>

</body>
</html>
